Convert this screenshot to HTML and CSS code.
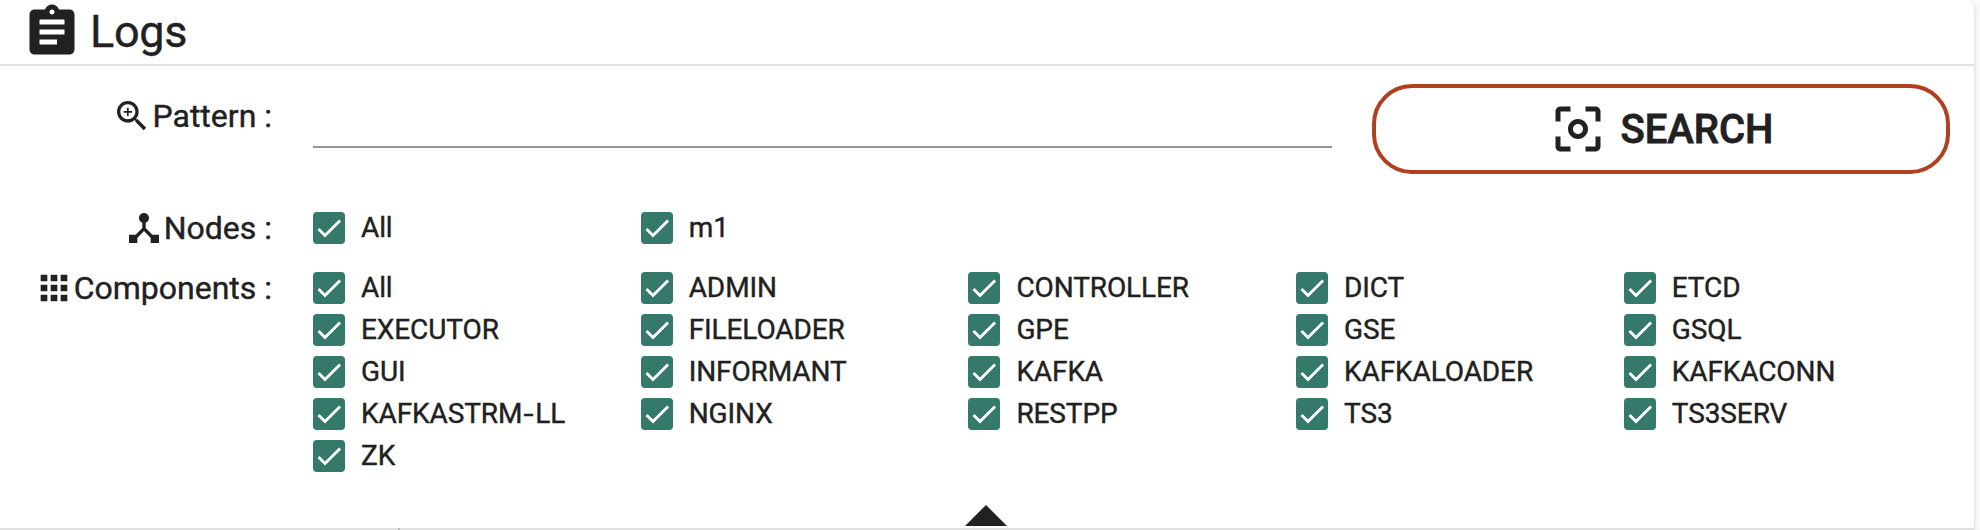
FILE: index.html
```html
<!DOCTYPE html>
<html lang="en">
<head>
<meta charset="utf-8">
<title>Logs</title>
<link rel="stylesheet" href="styles.css">
</head>
<body>
<svg class="defs" aria-hidden="true">
  <symbol id="check" viewBox="0 0 24 24"><path d="M4.1 12.7 9 17.6 20.3 6.3" fill="none" stroke="#fff" stroke-width="2.13"/></symbol>
</svg>
<main class="card">
  <header class="header">
    <svg class="icon-lg" viewBox="0 0 24 24"><path d="M19 3h-4.18C14.4 1.84 13.3 1 12 1c-1.3 0-2.4.84-2.82 2H5c-1.1 0-2 .9-2 2v14c0 1.1.9 2 2 2h14c1.1 0 2-.9 2-2V5c0-1.1-.9-2-2-2zm-7 0c.55 0 1 .45 1 1s-.45 1-1 1-1-.45-1-1 .45-1 1-1zm2 14H7v-2h7v2zm3-4H7v-2h10v2zm0-4H7V7h10v2z"/></svg>
    <h1 class="title">Logs</h1>
  </header>
  <section class="row row-pattern">
    <div class="label"><svg class="icon" viewBox="0 0 24 24"><path d="M15.5 14h-.79l-.28-.27C15.41 12.59 16 11.11 16 9.5 16 5.91 13.09 3 9.5 3S3 5.91 3 9.5 5.91 16 9.5 16c1.61 0 3.09-.59 4.23-1.57l.27.28v.79l5 4.99L20.49 19l-4.99-5zm-6 0C7.01 14 5 11.99 5 9.5S7.01 5 9.5 5 14 7.01 14 9.5 11.99 14 9.5 14zm2.5-4h-2v2H9v-2H7V9h2V7h1v2h2v1z"/></svg><span>Pattern :</span></div>
    <input class="field" type="text" aria-label="Pattern">
    <button class="search" type="button"><svg class="icon-lg" viewBox="0 0 24 24"><path d="M5 15H3v4c0 1.1.9 2 2 2h4v-2H5v-4zM5 5h4V3H5c-1.1 0-2 .9-2 2v4h2V5zm14-2h-4v2h4v4h2V5c0-1.1-.9-2-2-2zm0 16h-4v2h4c1.1 0 2-.9 2-2v-4h-2v4zM12 8c-2.21 0-4 1.79-4 4s1.79 4 4 4 4-1.79 4-4-1.79-4-4-4zm0 6c-1.1 0-2-.9-2-2s.9-2 2-2 2 .9 2 2-.9 2-2 2z"/></svg><span class="search-text">SEARCH</span></button>
  </section>
  <section class="row row-nodes">
    <div class="label"><svg class="icon" viewBox="0 0 24 24"><path d="M17 16l-4-4V8.82C14.16 8.4 15 7.3 15 6c0-1.66-1.34-3-3-3S9 4.34 9 6c0 1.3.84 2.4 2 2.82V12l-4 4H3v5h5v-3.05l4-4.2 4 4.2V21h5v-5h-4z"/></svg><span>Nodes :</span></div>
    <div class="options">
      <div class="option"><svg class="box"><use href="#check"/></svg><span>All</span></div>
      <div class="option"><svg class="box"><use href="#check"/></svg><span>m1</span></div>
    </div>
  </section>
  <section class="row row-components">
    <div class="label"><svg class="icon" viewBox="0 0 24 24"><path d="M4 8h4V4H4v4zm6 12h4v-4h-4v4zm-6 0h4v-4H4v4zm0-6h4v-4H4v4zm6 0h4v-4h-4v4zm6-10v4h4V4h-4zm-6 4h4V4h-4v4zm6 6h4v-4h-4v4zm0 6h4v-4h-4v4z"/></svg><span>Components :</span></div>
    <div class="options">
      <div class="option"><svg class="box"><use href="#check"/></svg><span>All</span></div>
      <div class="option"><svg class="box"><use href="#check"/></svg><span>ADMIN</span></div>
      <div class="option"><svg class="box"><use href="#check"/></svg><span>CONTROLLER</span></div>
      <div class="option"><svg class="box"><use href="#check"/></svg><span>DICT</span></div>
      <div class="option"><svg class="box"><use href="#check"/></svg><span>ETCD</span></div>
      <div class="option"><svg class="box"><use href="#check"/></svg><span>EXECUTOR</span></div>
      <div class="option"><svg class="box"><use href="#check"/></svg><span>FILELOADER</span></div>
      <div class="option"><svg class="box"><use href="#check"/></svg><span>GPE</span></div>
      <div class="option"><svg class="box"><use href="#check"/></svg><span>GSE</span></div>
      <div class="option"><svg class="box"><use href="#check"/></svg><span>GSQL</span></div>
      <div class="option"><svg class="box"><use href="#check"/></svg><span>GUI</span></div>
      <div class="option"><svg class="box"><use href="#check"/></svg><span>INFORMANT</span></div>
      <div class="option"><svg class="box"><use href="#check"/></svg><span>KAFKA</span></div>
      <div class="option"><svg class="box"><use href="#check"/></svg><span>KAFKALOADER</span></div>
      <div class="option"><svg class="box"><use href="#check"/></svg><span>KAFKACONN</span></div>
      <div class="option"><svg class="box"><use href="#check"/></svg><span>KAFKASTRM<span class="hyphen">-</span>LL</span></div>
      <div class="option"><svg class="box"><use href="#check"/></svg><span>NGINX</span></div>
      <div class="option"><svg class="box"><use href="#check"/></svg><span>RESTPP</span></div>
      <div class="option"><svg class="box"><use href="#check"/></svg><span>TS3</span></div>
      <div class="option"><svg class="box"><use href="#check"/></svg><span>TS3SERV</span></div>
      <div class="option"><svg class="box"><use href="#check"/></svg><span>ZK</span></div>
    </div>
  </section>
  <div class="collapse"><svg class="arrow" viewBox="0 0 42 21"><path d="M0 21 21 0l21 21z"/></svg></div>
  <div class="results"><div class="results-side"></div></div>
</main>
</body>
</html>
```

FILE: styles.css
```css
* { box-sizing: border-box; }
body {
  margin: 0;
  height: 530px;
  overflow: hidden;
  background: #fafafa;
  color: #212121;
  font-family: Roboto, "Liberation Sans", sans-serif;
  -webkit-text-stroke: .4px #212121;
}
svg { fill: #212121; flex: none; display: block; }
.defs { display: none; }
.card {
  width: 1974px;
  height: 530px;
  display: flex;
  flex-direction: column;
  background: #fff;
  border-top-right-radius: 8px;
  box-shadow: 0 4px 2px -2px rgba(0,0,0,.2), 0 2px 2px rgba(0,0,0,.14), 0 2px 6px rgba(0,0,0,.12);
}
.header {
  height: 66px;
  flex: none;
  display: flex;
  align-items: center;
  gap: 8px;
  padding-left: 22px;
  border-bottom: 2px solid #e0e0e0;
}
.title { margin: 0; font-size: 45px; font-weight: 400; line-height: 60px; letter-spacing: -.3px; }
.icon-lg { width: 60px; height: 60px; }
.icon { width: 40px; height: 40px; }
.row {
  display: grid;
  grid-template-columns: 273px 1fr;
  column-gap: 40px;
  align-items: start;
}
.row-pattern {
  grid-template-columns: 273px 1019px 578px;
  padding-top: 18px;
}
.label {
  display: flex;
  justify-content: flex-end;
  padding-right: 1px;
  font-size: 32px;
  line-height: 40px;
  white-space: nowrap;
}
.row-pattern .label { margin-top: 12px; }
.field {
  height: 64px;
  padding: 0;
  border: 0;
  border-bottom: 2px solid #949494;
  outline: 0;
  background: transparent;
  font: 32px Roboto, sans-serif;
}
.search {
  height: 90px;
  display: flex;
  align-items: center;
  justify-content: center;
  gap: 12px;
  padding: 0;
  border: 4px solid #b04020;
  border-radius: 40px;
  background: #fff;
  color: #212121;
  font: 500 40px/60px Roboto, sans-serif;
  -webkit-text-stroke: .8px #212121;
}
.search-text { margin-top: 2px; }
.row-nodes { margin-top: 34px; }
.row-components { margin-top: 20px; }
.options {
  display: grid;
  grid-template-columns: repeat(5, 327.7px);
  row-gap: 10px;
  padding-top: 4px;
}
.option {
  display: flex;
  gap: 16px;
  height: 32px;
  font-size: 28px;
  line-height: 31px;
  letter-spacing: -.1px;
  white-space: nowrap;
}
.hyphen {
  display: inline-block;
  width: 13px;
  text-align: center;
  transform: scaleX(1.3);
}
.box { width: 32px; height: 32px; border-radius: 4px; background: #35796b; }
.collapse {
  flex: 1;
  display: flex;
  align-items: flex-end;
  padding: 0 0 2px 965px;
}
.arrow { width: 42px; height: 21px; }
.results { height: 2px; flex: none; background: #e0e0e0; padding-left: 398px; }
.results-side { width: 2px; height: 2px; background: #bdbdbd; }
```
